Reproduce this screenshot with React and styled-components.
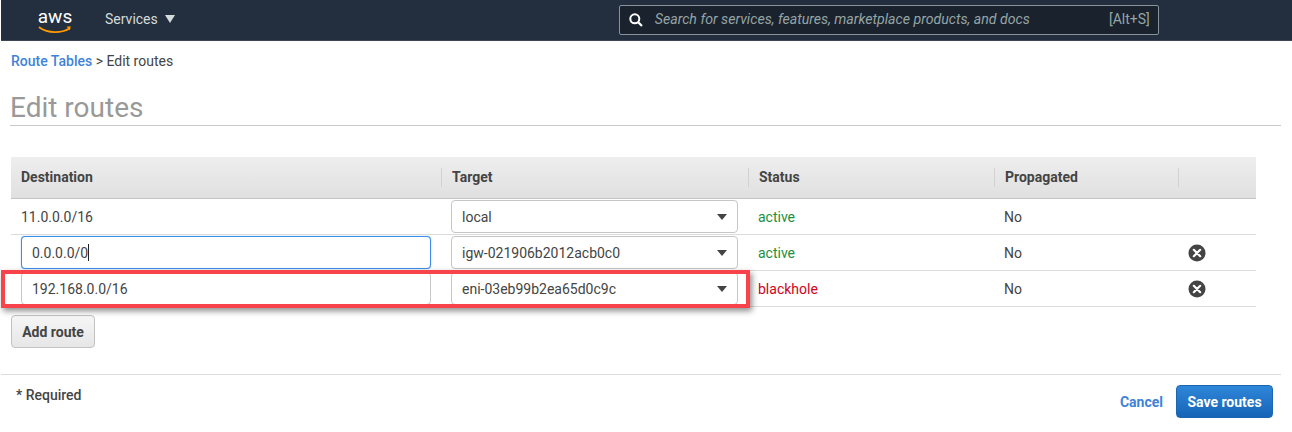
import React from 'react';
import styled, { createGlobalStyle } from 'styled-components';

const GlobalStyle = createGlobalStyle`
   html, body {
      margin: 0;
      padding: 0;
      background: #fff;
      font-family: Roboto, "Liberation Sans", sans-serif;
      font-size: 14px;
      color: #444;
   }
`;

const Nav = styled.header`
   display: flex;
   align-items: center;
   height: 40px;
   margin-left: 1px;
   background: #232f3e;
   border-bottom: 1px solid #3c4652;
`;

const Logo = styled.svg`
   display: block;
   width: 36px;
   height: 32px;
   margin-left: 36px;
`;

const Services = styled.div`
   display: flex;
   align-items: center;
   gap: 7px;
   margin: 0 0 2px 32px;
   color: #d5dbdb;
   font-size: 14px;
`;

const DownArrow = styled.span`
   width: 0;
   height: 0;
   border-left: 5.5px solid transparent;
   border-right: 5.5px solid transparent;
   border-top: 8px solid #d5dbdb;
`;

const Search = styled.div`
   display: flex;
   align-items: center;
   box-sizing: border-box;
   width: 540px;
   height: 30px;
   margin-left: 444px;
   padding: 0 8px 0 9px;
   background: #1a222d;
   border: 1px solid #87929c;
   border-radius: 2px;
`;

const SearchText = styled.span`
   flex: 1;
   margin-left: 12px;
   padding-bottom: 2px;
   color: #95a5a6;
   font-size: 14.15px;
   font-style: italic;
`;

const Shortcut = styled.span`
   padding-bottom: 2px;
   color: #95a5a6;
   font-size: 14px;
`;

const Main = styled.main`
   padding: 12px 11px 0 10px;
`;

const Breadcrumb = styled.div`
   padding-left: 1px;
   line-height: 16px;
   color: #444;
`;

const CrumbLink = styled.span`
   color: #3f82d9;
   font-weight: 500;
`;

const Title = styled.h1`
   margin: 22px 0 0;
   height: 34px;
   line-height: 34px;
   font-size: 28px;
   font-weight: 400;
   color: #999;
   border-bottom: 1px solid #c8c8c8;
`;

const Table = styled.section`
   width: 1245px;
   margin: 31px 0 0 1px;
`;

const columns = '430px 307px 246px 184px 78px';

const HeadRow = styled.div`
   display: grid;
   grid-template-columns: ${columns};
   align-items: center;
   box-sizing: border-box;
   height: 42px;
   background: linear-gradient(#eeeeee, #e0e0e0);
   border-bottom: 1px solid #c4c4c4;
`;

const HeadCell = styled.div`
   display: flex;
   align-items: center;
   box-sizing: border-box;
   height: 19px;
   padding: 0 0 2px 10px;
   border-left: ${p => (p.$first ? '0' : '1px solid #d2d2d2')};
   font-weight: 700;
   color: #444;
`;

const Row = styled.div`
   position: relative;
   display: grid;
   grid-template-columns: ${columns};
   align-items: center;
   box-sizing: border-box;
   height: 36px;
   border-bottom: 1px solid #dcdcdc;
`;

const Cell = styled.div`
   padding-left: 10px;
   color: #444;
`;

const Status = styled(Cell)`
   color: ${p => (p.$bad ? '#d0021b' : '#1d8f3c')};
`;

const Field = styled.div`
   display: flex;
   align-items: center;
   box-sizing: border-box;
   width: ${p => (p.$wide ? '410px' : '287px')};
   height: 33px;
   padding: 0 10px;
   background: #fff;
   border: 1px solid ${p => (p.$focus ? '#3c8ee8' : '#c6c6c6')};
   border-radius: 4px;
   box-shadow: ${p => (p.$focus ? '0 0 1px #3c8ee8' : 'none')};
   color: #444;
`;

const Caret = styled.span`
   width: 1px;
   height: 17px;
   background: #222;
`;

const SelectField = styled(Field)`
   justify-content: space-between;
   margin-left: 10px;
   padding-right: 10px;
`;

const SelectArrow = styled.span`
   width: 0;
   height: 0;
   border-left: 5px solid transparent;
   border-right: 5px solid transparent;
   border-top: 6px solid #444;
`;

const Remove = styled.svg`
   display: block;
   width: 18px;
   height: 18px;
   margin: 1px 0 0 10px;
`;

// annotation drawn over the third row of the screenshot
const Highlight = styled.div`
   position: absolute;
   top: -1px;
   left: -10px;
   width: 749px;
   height: 38px;
   box-sizing: border-box;
   border: 4px solid #f8434b;
   box-shadow: 2px 3px 6px rgba(0, 0, 0, 0.45);
   pointer-events: none;
`;

const AddRoute = styled.button`
   display: block;
   box-sizing: border-box;
   width: 84px;
   height: 33px;
   margin: 8px 0 0 1px;
   padding: 0;
   background: linear-gradient(#f6f6f6, #e6e6e6);
   border: 1px solid #c2c2c2;
   border-radius: 4px;
   font-family: inherit;
   font-size: 14px;
   font-weight: 700;
   color: #444;
`;

const Footer = styled.footer`
   display: flex;
   justify-content: space-between;
   box-sizing: border-box;
   width: 1280px;
   margin: 26px 0 0 -9px;
   padding: 10px 8px 0 15px;
   border-top: 1px solid #dcdcdc;
`;

const Required = styled.div`
   line-height: 20px;
   font-weight: 500;
   color: #444;
`;

const Actions = styled.div`
   display: flex;
   align-items: center;
   gap: 13px;
`;

const Cancel = styled.span`
   color: #3f82d9;
   font-weight: 700;
`;

const SaveButton = styled.button`
   box-sizing: border-box;
   width: 97px;
   height: 33px;
   padding: 0;
   background: linear-gradient(#2f86d8, #1664b8);
   border: 1px solid #1a66b3;
   border-radius: 4px;
   font-family: inherit;
   font-size: 14px;
   font-weight: 700;
   color: #fff;
`;

const routes = [
   { id: 1, destination: '11.0.0.0/16', target: 'local', status: 'active' },
   { id: 2, destination: '0.0.0.0/0', target: 'igw-021906b2012acb0c0', status: 'active', editable: true, focus: true },
   { id: 3, destination: '192.168.0.0/16', target: 'eni-03eb99b2ea65d0c9c', status: 'blackhole', editable: true },
];

const headers = ['Destination', 'Target', 'Status', 'Propagated', ''];

const RemoveIcon = () => (
   <Remove viewBox="0 0 18 18">
      <circle cx="9" cy="9" r="8.5" fill="#444" />
      <path d="M5.8 5.8l6.4 6.4M12.2 5.8l-6.4 6.4" stroke="#fff" strokeWidth="2.2" strokeLinecap="round" />
   </Remove>
);

const RouteRow = ({ route }) => {
   const { destination, target, status, editable, focus } = route;

   return (
      <Row>
         <Cell>
            {editable ? (
               <Field $wide $focus={focus}>
                  {destination}
                  {focus && <Caret />}
               </Field>
            ) : (
               destination
            )}
         </Cell>
         <SelectField as="div">
            {target}
            <SelectArrow />
         </SelectField>
         <Status $bad={status === 'blackhole'}>{status}</Status>
         <Cell>No</Cell>
         <div>{editable && <RemoveIcon />}</div>
         {status === 'blackhole' && <Highlight />}
      </Row>
   );
};

const App = () => (
   <>
      <GlobalStyle />
      <Nav>
         <Logo viewBox="0 0 36 32">
            <text x="18" y="19" textAnchor="middle" fontFamily="Roboto, sans-serif" fontSize="19" fill="#fff">aws</text>
            <path d="M2.5 23.5C11 29.5 24 29.5 32.5 24.5" fill="none" stroke="#f90" strokeWidth="1.8" strokeLinecap="round" />
            <path d="M29.5 22.8l4.2-.6-1 4z" fill="#f90" />
         </Logo>
         <Services>
            Services
            <DownArrow />
         </Services>
         <Search>
            <svg width="14" height="14" viewBox="0 0 14 14">
               <circle cx="5.8" cy="5.8" r="4.5" fill="none" stroke="#fff" strokeWidth="2" />
               <path d="M9.2 9.2L13 13" stroke="#fff" strokeWidth="2.2" />
            </svg>
            <SearchText>Search for services, features, marketplace products, and docs</SearchText>
            <Shortcut>[Alt+S]</Shortcut>
         </Search>
      </Nav>
      <Main>
         <Breadcrumb>
            <CrumbLink>Route Tables</CrumbLink> &gt; Edit routes
         </Breadcrumb>
         <Title>Edit routes</Title>
         <Table>
            <HeadRow>
               {headers.map((header, index) => (
                  <HeadCell key={index} $first={index === 0}>{header}</HeadCell>
               ))}
            </HeadRow>
            {routes.map(route => (
               <RouteRow key={route.id} route={route} />
            ))}
         </Table>
         <AddRoute>Add route</AddRoute>
         <Footer>
            <Required>* Required</Required>
            <Actions>
               <Cancel>Cancel</Cancel>
               <SaveButton>Save routes</SaveButton>
            </Actions>
         </Footer>
      </Main>
   </>
);

export default App;
